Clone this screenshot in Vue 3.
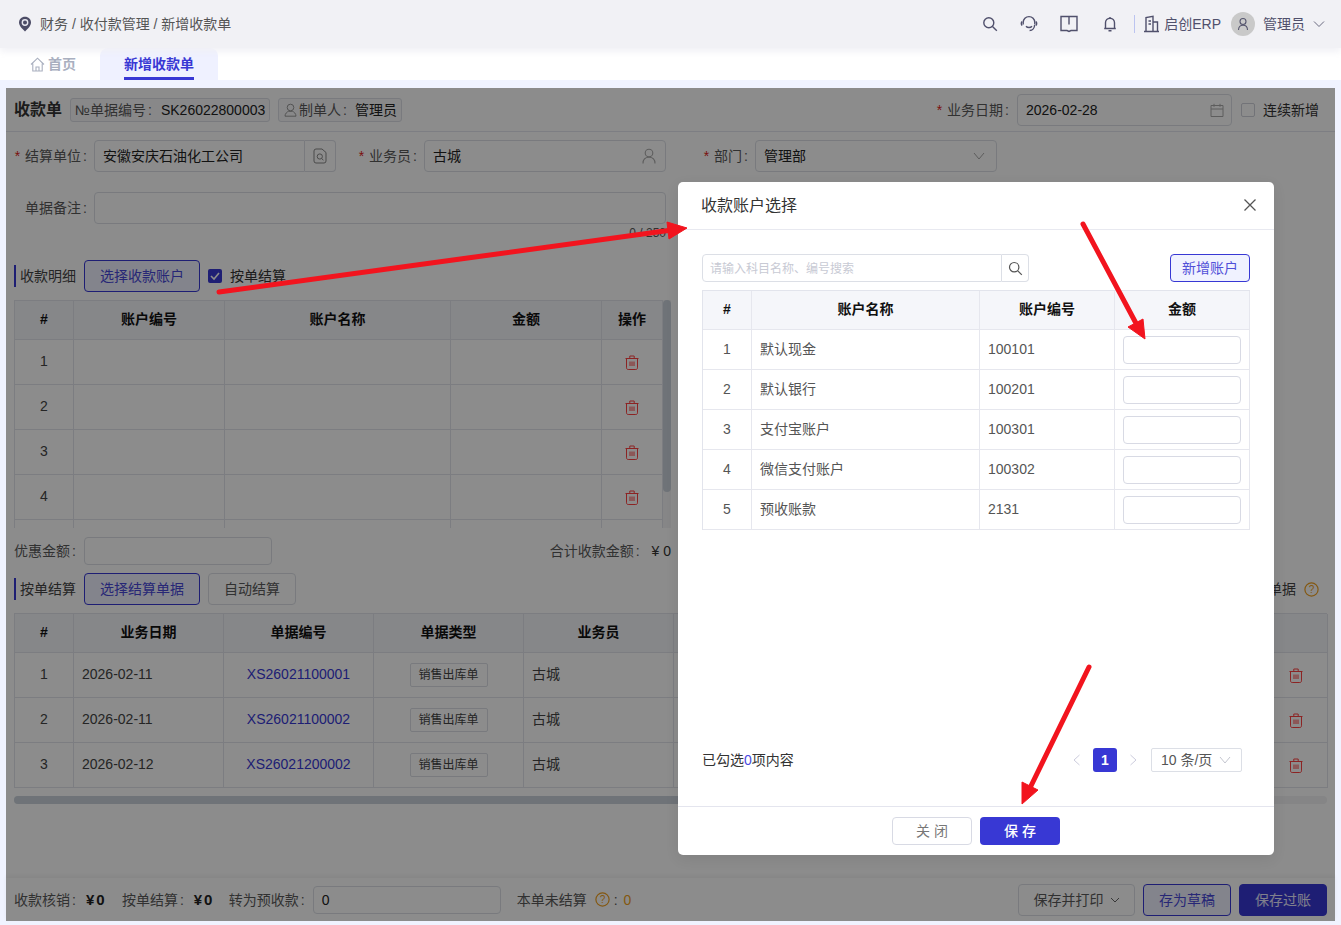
<script setup>
const accountRows = [1, 2, 3, 4]
const billRows = [
  { no: 1, date: '2026-02-11', code: 'XS26021100001' },
  { no: 2, date: '2026-02-11', code: 'XS26021100002' },
  { no: 3, date: '2026-02-12', code: 'XS26021200002' }
]
const modalRows = [
  { no: 1, name: '默认现金', code: '100101' },
  { no: 2, name: '默认银行', code: '100201' },
  { no: 3, name: '支付宝账户', code: '100301' },
  { no: 4, name: '微信支付账户', code: '100302' },
  { no: 5, name: '预收账款', code: '2131' }
]
</script>

<template>
  <div class="app">
    <header class="topbar">
      <svg class="pin" width="14" height="16" viewBox="0 0 14 16"><path d="M7 .8C3.500 .8 1 3.400 1 6.600c0 3.400 3.600 6.900 6 8.800 2.400-1.900 6-5.400 6-8.800C13 3.400 10.500 .8 7 .8z" fill="#4c4c66"/><circle cx="7" cy="6.500" r="2.700" fill="none" stroke="#e8e8f0" stroke-width="1.400"/></svg>
      <span class="crumb">财务 / 收付款管理 / 新增收款单</span>
      <div class="top-actions">
        <svg class="ti" width="18" height="18" viewBox="0 0 18 18"><circle cx="7.800" cy="7.800" r="5" /><path d="M11.500 11.500l4.300 4.300"/></svg>
        <svg class="ti gap21" width="18" height="18" viewBox="0 0 18 18"><path d="M3.200 9.500V7.400a5.800 5.800 0 0 1 11.600 0v2.100"/><path d="M2.200 6.500c-1.200 1-1.200 3 0 4M15.800 6.500c1.200 1 1.200 3 0 4"/><path d="M6 11.200c1.500 1.800 4.500 1.800 6 0"/><path d="M14.600 10c0 3-2 5.500-5 5.500"/></svg>
        <svg class="ti gap21" width="20" height="18" viewBox="0 0 20 18"><path d="M2 1.500h16v14h-6l-2 1-2-1H2z"/><path d="M10 1.500v8"/></svg>
        <svg class="ti gap22" width="18" height="18" viewBox="0 0 18 18"><path d="M4.500 13.500V7.800a4.500 4.500 0 0 1 9 0v5.700zM3.200 13.500h11.600M7.500 15.800h3M9 2V3.200"/></svg>
        <span class="divider"></span>
        <svg class="ti" width="17" height="18" viewBox="0 0 17 18"><path d="M1 16.500h15M3 16.500V2.500l7-1.200v15.200M10 7h4.500v9.500M5.500 6h2.500M5.500 9h2.500"/></svg>
        <span class="company">启创ERP</span>
        <span class="avatar">
          <svg width="14" height="14" viewBox="0 0 14 14"><circle cx="7" cy="4.500" r="3" fill="none" stroke="#55556e" stroke-width="1.100"/><path d="M2.500 13c0-3 2-4.800 4.500-4.800s4.500 1.800 4.500 4.800" fill="none" stroke="#55556e" stroke-width="1.100"/></svg>
        </span>
        <span class="username">管理员</span>
        <svg class="chev-top" width="12" height="8" viewBox="0 0 12 8"><path d="M1 1.500l5 5 5-5" fill="none" stroke="#6a6a80" stroke-width="1"/></svg>
      </div>
    </header>

    <nav class="tabs">
      <div class="tab">
        <svg width="15" height="15" viewBox="0 0 15 15"><path d="M1 7.500L7.500 1.200 14 7.500M2.800 6.500V14h9.400V6.500M6 14v-4h3v4" fill="none" stroke="#a9afbf" stroke-width="1.100"/></svg>
        <span>首页</span>
      </div>
      <div class="tab active"><span class="tab-text">新增收款单</span></div>
    </nav>

    <main class="panel">
      <div class="form-head">
        <strong class="title">收款单</strong>
        <div class="tag tag-no"><span class="muted">№单据编号<span class="c">:</span></span><span class="strong-val v9">SK26022800003</span></div>
        <div class="tag tag-user">
          <svg width="13" height="14" viewBox="0 0 13 14"><circle cx="6.500" cy="4.500" r="3.300" fill="none" stroke="#999" stroke-width="1"/><path d="M1 13.200c0-2.500 2-4.400 3.500-4.900h4c1.500.5 3.500 2.400 3.500 4.900z" fill="none" stroke="#999" stroke-width="1"/></svg>
          <span class="muted">制单人<span class="c">:</span></span><span class="strong-val v6">管理员</span>
        </div>
        <label class="date-label"><i>*</i>业务日期<span class="c">:</span></label>
        <div class="input date-input">
          <span>2026-02-28</span>
          <svg width="14" height="14" viewBox="0 0 14 14"><path d="M1 2.500h12v11H1zM1 6h12M4 .8v3M10 .8v3" fill="none" stroke="#aaa" stroke-width="1"/></svg>
        </div>
        <span class="check-empty"></span>
        <span class="check-text">连续新增</span>
      </div>

      <div class="form-row">
        <label class="flabel w80"><i>*</i>结算单位<span class="c">:</span></label>
        <div class="input unit-input"><span>安徽安庆石油化工公司</span></div>
        <div class="addon">
          <svg width="14" height="16" viewBox="0 0 14 16"><path d="M3 1h6l4 3.500V13a2 2 0 0 1-2 2H3a2 2 0 0 1-2-2V3a2 2 0 0 1 2-2z" fill="none" stroke="#888" stroke-width="1"/><circle cx="6.800" cy="8.500" r="2.600" fill="none" stroke="#888" stroke-width="1"/><path d="M8.800 10.500l1.500 1.800" stroke="#888"/></svg>
        </div>
        <label class="flabel w88"><i>*</i>业务员<span class="c">:</span></label>
        <div class="input w242">
          <span>古城</span>
          <svg width="16" height="16" viewBox="0 0 16 16"><circle cx="8" cy="5" r="3.800" fill="none" stroke="#aaa" stroke-width="1.100"/><path d="M2 15.500c0-4 2.500-6.200 6-6.200s6 2.200 6 6.200" fill="none" stroke="#aaa" stroke-width="1.100"/></svg>
        </div>
        <label class="flabel w89"><i>*</i>部门<span class="c">:</span></label>
        <div class="input w242 dept">
          <span>管理部</span>
          <svg width="12" height="8" viewBox="0 0 12 8"><path d="M1 1l5 6 5-6" fill="none" stroke="#aaa" stroke-width="1"/></svg>
        </div>
      </div>

      <div class="form-row memo-row">
        <label class="flabel w80">单据备注<span class="c">:</span></label>
        <div class="input memo"></div>
      </div>
      <div class="counter">0 / 250</div>

      <div class="section">
        <span class="sec-title">收款明细</span>
        <button class="btn outline w116">选择收款账户</button>
        <span class="check-on">
          <svg width="10" height="10" viewBox="0 0 10 10"><path d="M1 5l3 3 5-6" fill="none" stroke="#fff" stroke-width="1.600"/></svg>
        </span>
        <span class="check-text">按单结算</span>
      </div>

      <div class="detail">
        <div class="grid-table detail-table">
          <div class="tr th">
            <div>#</div><div>账户编号</div><div>账户名称</div><div>金额</div><div>操作</div>
          </div>
          <div v-for="n in accountRows" :key="n" class="tr">
            <div>{{ n }}</div><div></div><div></div><div></div>
            <div>
              <svg class="trash" width="14" height="15" viewBox="0 0 14 15"><path d="M.5 3.500h13M4.800 3.500V1h4.400v2.500M1.500 3.500v9.300c0 1.100.7 1.700 1.700 1.700h7.600c1 0 1.700-.6 1.700-1.700V3.500M5 6.500v4.500M7 6.500v4.500M9 6.500v4.500"/></svg>
            </div>
          </div>
          <div class="tr"><div></div><div></div><div></div><div></div><div></div></div>
        </div>
        <div class="vbar"><span></span></div>
      </div>

      <div class="summary">
        <label>优惠金额<span class="c">:</span></label>
        <div class="input discount"></div>
        <span class="total"><span class="muted">合计收款金额<span class="c">:</span></span><b>¥ 0</b></span>
      </div>

      <div class="section sec2">
        <span class="sec-title">按单结算</span>
        <button class="btn outline w116">选择结算单据</button>
        <button class="btn plain w88b">自动结算</button>
        <span class="sec-right">
          <span>结算单据</span>
          <svg width="15" height="15" viewBox="0 0 15 15"><circle cx="7.500" cy="7.500" r="6.600" fill="none" stroke="#f0a020" stroke-width="1.200"/><text x="7.500" y="11" text-anchor="middle" font-size="10" fill="#f0a020">?</text></svg>
        </span>
      </div>

      <div class="grid-table bill-table">
        <div class="tr th">
          <div>#</div><div>业务日期</div><div>单据编号</div><div>单据类型</div><div>业务员</div><div></div><div></div>
        </div>
        <div v-for="r in billRows" :key="r.no" class="tr">
          <div>{{ r.no }}</div>
          <div class="left">{{ r.date }}</div>
          <div class="link">{{ r.code }}</div>
          <div><span class="type-tag">销售出库单</span></div>
          <div class="left">古城</div>
          <div></div>
          <div>
            <svg class="trash shift" width="14" height="15" viewBox="0 0 14 15"><path d="M.5 3.500h13M4.800 3.500V1h4.400v2.500M1.500 3.500v9.300c0 1.100.7 1.700 1.700 1.700h7.600c1 0 1.700-.6 1.700-1.700V3.500M5 6.500v4.500M7 6.500v4.500M9 6.500v4.500"/></svg>
          </div>
        </div>
      </div>
      <div class="hbar"><span></span></div>

      <footer class="form-foot">
        <span class="muted">收款核销<span class="c">:</span></span><b class="money">¥0</b>
        <span class="muted m16">按单结算<span class="c">:</span></span><b class="money">¥0</b>
        <span class="muted m15">转为预收款<span class="c">:</span></span>
        <div class="input foot-input"><span>0</span></div>
        <span class="muted m16">本单未结算</span>
        <svg class="foot-q" width="15" height="15" viewBox="0 0 15 15"><circle cx="7.500" cy="7.500" r="6.600" fill="none" stroke="#f0a020" stroke-width="1.200"/><text x="7.500" y="11" text-anchor="middle" font-size="10" fill="#f0a020">?</text></svg>
        <span class="muted colon">:</span><span class="orange">0</span>
        <div class="foot-btns">
          <button class="btn plain w117">保存并打印
            <svg width="10" height="6" viewBox="0 0 10 6"><path d="M1 1l4 4 4-4" fill="none" stroke="#666" stroke-width="1"/></svg>
          </button>
          <button class="btn outline w88b">存为草稿</button>
          <button class="btn solid w88b">保存过账</button>
        </div>
      </footer>

      <div class="mask"></div>

      <section class="modal">
        <div class="modal-head">
          <span>收款账户选择</span>
          <svg width="14" height="14" viewBox="0 0 14 14"><path d="M1.500 1.500l11 11M12.500 1.500l-11 11" stroke="#555" stroke-width="1.300"/></svg>
        </div>
        <div class="modal-body">
          <div class="modal-tools">
            <div class="search-box"><span>请输入科目名称、编号搜索</span></div>
            <div class="search-btn">
              <svg width="15" height="15" viewBox="0 0 15 15"><circle cx="6.200" cy="6.200" r="4.700" fill="none" stroke="#555" stroke-width="1.200"/><path d="M9.800 9.800l4 4" stroke="#555" stroke-width="1.200"/></svg>
            </div>
            <button class="btn add">新增账户</button>
          </div>
          <div class="grid-table modal-table">
            <div class="tr th">
              <div>#</div><div>账户名称</div><div>账户编号</div><div>金额</div>
            </div>
            <div v-for="r in modalRows" :key="r.no" class="tr">
              <div>{{ r.no }}</div>
              <div class="left">{{ r.name }}</div>
              <div class="left">{{ r.code }}</div>
              <div class="amount-cell"><span class="amount"></span></div>
            </div>
          </div>
          <div class="pager-row">
            <span class="picked">已勾选<em>0</em>项内容</span>
            <div class="pager">
              <svg width="9" height="12" viewBox="0 0 9 12"><path d="M7.500 1L2 6l5.500 5" fill="none" stroke="#ccd" stroke-width="1"/></svg>
              <span class="page-on">1</span>
              <svg width="9" height="12" viewBox="0 0 9 12"><path d="M1.500 1L7 6l-5.500 5" fill="none" stroke="#ccd" stroke-width="1"/></svg>
              <div class="page-size">
                <span>10 条/页</span>
                <svg width="12" height="8" viewBox="0 0 12 8"><path d="M1 1l5 6 5-6" fill="none" stroke="#c4c6d0" stroke-width="1"/></svg>
              </div>
            </div>
          </div>
        </div>
        <div class="modal-foot">
          <button class="btn close">关 闭</button>
          <button class="btn save">保 存</button>
        </div>
      </section>
    </main>

    <svg class="arrows" width="1341" height="925" viewBox="0 0 1341 925">
      <g fill="#f2141e" stroke="#f2141e">
        <path d="M219 292L672 230" stroke-width="5" stroke-linecap="round" fill="none"/>
        <path d="M687 228L667 222L669 239Z" stroke-width="1"/>
        <path d="M1083 224L1138 327" stroke-width="5" stroke-linecap="round" fill="none"/>
        <path d="M1145 339L1128 327L1143 319Z" stroke-width="1"/>
        <path d="M1089 667L1029 790" stroke-width="5" stroke-linecap="round" fill="none"/>
        <path d="M1022 804L1022 782L1038 790Z" stroke-width="1"/>
      </g>
    </svg>
  </div>
</template>

<style>
html, body { margin: 0; padding: 0; background: #f0f3ff; }
</style>

<style scoped>
* { box-sizing: border-box; }
.app {
  position: relative;
  width: 1341px;
  height: 925px;
  overflow: hidden;
  display: flex;
  flex-direction: column;
  background: #f0f3ff;
  color: #333;
  font: 14px/20px "Liberation Sans", "Noto Sans CJK SC", sans-serif;
}
.topbar {
  height: 48px;
  flex: none;
  display: flex;
  align-items: center;
  padding-left: 18px;
  background: #f1f1f5;
  box-shadow: 0 4px 6px rgba(241, 241, 245, .9);
  position: relative;
  z-index: 1;
}
.pin { margin-right: 8px; }
.crumb { color: #555; }
.top-actions { margin-left: auto; display: flex; align-items: center; padding-right: 16px; }
.ti { fill: none; stroke: #50506c; stroke-width: 1.400; }
.gap21 { margin-left: 21px; }
.gap22 { margin-left: 22px; }
.divider { width: 1px; height: 18px; background: #bcc4f0; margin: 0 8px 0 15px; }
.company { margin-left: 4px; color: #50506c; }
.avatar {
  width: 24px; height: 24px; border-radius: 50%;
  background: #c9c9c9; margin-left: 10px;
  display: flex; align-items: center; justify-content: center;
}
.username { margin-left: 8px; color: #50506c; }
.chev-top { margin-left: 8px; }

.tabs { height: 32px; flex: none; background: #fff; display: flex; }
.tab {
  width: 100px; display: flex; align-items: center; gap: 3px;
  padding-left: 30px; color: #a9afbf; font-weight: 700;
}
.tab.active {
  width: 118px; padding-left: 24px;
  background: #eff1ff; border-radius: 8px 8px 0 0;
  color: #3838d4;
}
.tab-text { height: 32px; line-height: 32px; border-bottom: 3px solid #3838d4; }

.panel {
  position: relative;
  margin: 8px 6px 4px 6px;
  height: 833px;
  background: #fff;
  padding: 0 8px;
  display: flex;
  flex-direction: column;
}
.muted { color: #5a5a5a; white-space: nowrap; }
.c { margin-left: 2px; }
.form-head {
  height: 44px; flex: none;
  display: flex; align-items: center;
  margin: 0 -8px; padding: 0 8px;
  border-bottom: 1px solid #e4e6ee;
}
.title { font-size: 16px; width: 56px; }
.tag {
  height: 24px; display: flex; align-items: center;
  border: 1px solid #dcdfe6; border-radius: 3px; background: #f8f8fa;
  padding: 0 4px; margin-right: 8px;
}
.tag-no { width: 200px; }
.tag-user { width: 124px; gap: 2px; padding-left: 5px; }
.strong-val { color: #222; white-space: nowrap; }
.v9 { margin-left: 9px; }
.v6 { margin-left: 6px; }
label i { color: #e02020; font-style: normal; margin-right: 5px; }
.date-label { margin-left: auto; color: #5a5a5a; margin-right: 8px; white-space: nowrap; }
.input {
  height: 32px; flex: none;
  display: flex; align-items: center; justify-content: space-between;
  border: 1px solid #dcdfe6; border-radius: 4px; padding: 0 8px;
  background: #fff;
  color: #222;
}
.date-input { width: 215px; padding-right: 7px; }
.dept { padding-right: 11px; }
.check-empty { width: 14px; height: 14px; border: 1px solid #cfd2da; border-radius: 2px; margin: 0 8px 0 9px; }
.check-text { color: #333; }
.form-head .check-text { margin-right: 8px; }

.form-row { display: flex; align-items: center; margin-top: 8px; flex: none; height: 32px; }
.memo-row { margin-top: 20px; }
.flabel { flex: none; color: #5a5a5a; text-align: right; padding-right: 7px; white-space: nowrap; }
.w80 { width: 80px; }
.w88 { width: 88px; }
.w89 { width: 89px; }
.w242 { width: 242px; }
.unit-input { width: 211px; border-radius: 4px 0 0 4px; }
.addon {
  width: 31px; height: 32px; flex: none;
  display: flex; align-items: center; justify-content: center;
  border: 1px solid #dcdfe6; border-left: 0; border-radius: 0 4px 4px 0;
}
.memo { width: 572px; }
.counter { height: 18px; width: 652px; text-align: right; color: #5a5a5a; line-height: 18px; flex: none; font-size: 12px; }

.section { display: flex; align-items: center; height: 32px; margin-top: 18px; flex: none; }
.sec2 { margin-top: 8px; }
.sec-title {
  width: 70px; height: 22px; line-height: 22px;
  border-left: 2px solid #3838d4; padding-left: 4px; color: #444; white-space: nowrap;
}
.btn {
  height: 32px; flex: none; padding: 0;
  font: inherit; border-radius: 4px; cursor: pointer;
  display: inline-flex; align-items: center; justify-content: center;
}
.outline { background: #eff1ff; border: 1px solid #3838d4; color: #4848d8; }
.plain { background: #fff; border: 1px solid #dcdfe6; color: #5a5a5a; }
.solid { background: #3838d4; border: 1px solid #3838d4; color: #e8e8ff; }
.w116 { width: 116px; }
.w88b { width: 88px; }
.w117 { width: 117px; gap: 6px; }
.check-on {
  width: 14px; height: 14px; border-radius: 2px; background: #3838d4;
  margin: 0 8px; display: flex; align-items: center; justify-content: center;
}
.sec2 .btn.plain { margin-left: 8px; }
.sec-right { margin-left: auto; display: flex; align-items: center; gap: 8px; padding-right: 8px; color: #444; }

.grid-table { border-left: 1px solid #e2e4ec; border-top: 1px solid #e2e4ec; flex: none; }
.tr { display: grid; height: 45px; }
.tr > div {
  display: flex; align-items: center; justify-content: center;
  border-right: 1px solid #e2e4ec; border-bottom: 1px solid #e2e4ec;
  padding-bottom: 2px;
  color: #444;
  min-width: 0;
}
.tr > div.left { justify-content: flex-start; padding-left: 8px; }
.tr.th { height: 39px; background: #f5f6fa; }
.tr.th > div { font-weight: 700; color: #111; }
.trash { fill: none; stroke: #ff4040; stroke-width: 1; margin-top: 2px; }
.shift { margin-right: 2px; }

.detail { margin-top: 8px; width: 657px; height: 228px; display: flex; overflow: hidden; flex: none; }
.detail-table { width: 649px; }
.detail-table .tr { grid-template-columns: 59px 151px 226px 151px 61px; }
.vbar { width: 8px; height: 228px; flex: none; background: #f4f4f6; }
.vbar span { display: block; height: 192px; background: #cad1da; border-radius: 4px; }

.summary { display: flex; align-items: center; height: 28px; margin-top: 9px; width: 657px; flex: none; }
.summary label { width: 70px; color: #5a5a5a; white-space: nowrap; }
.discount { width: 188px; height: 28px; }
.total { margin-left: auto; display: flex; gap: 12px; }
.total b { font-weight: 400; color: #333; }

.bill-table { margin-top: 8px; width: 1313px; }
.bill-table .tr { grid-template-columns: 59px 150px 150px 150px 150px 592px 62px; }
.tr > div.link { color: #3838d4; }
.type-tag {
  width: 78px; height: 24px; border: 1px solid #dcdfe6; border-radius: 2px; margin-top: 2px;
  font-size: 12px; line-height: 23px; text-align: center; background: #fff; color: #444;
}
.hbar { margin-top: 8px; height: 8px; width: 1313px; background: #f2f2f4; border-radius: 4px; flex: none; }
.hbar span { display: block; width: 1240px; height: 8px; background: #cad1da; border-radius: 4px; }

.form-foot {
  margin: auto -8px 0; height: 43px; flex: none;
  padding: 0 8px;
  display: flex; align-items: center;
  background: #fff;
  box-shadow: 0 -2px 4px rgba(0, 0, 0, .05);
}
.money { margin-left: 10px; color: #222; width: 20px; font-size: 15px; letter-spacing: 2px; white-space: nowrap; }
.m16 { margin-left: 16px; }
.m15 { margin-left: 15px; }
.foot-input { width: 188px; height: 28px; margin-left: 8px; }
.foot-q { margin-left: 8px; }
.colon { margin-left: 4px; }
.orange { color: #f0a020; margin-left: 6px; }
.foot-btns { margin-left: auto; display: flex; gap: 8px; }
.foot-btns .btn { gap: 6px; }

.mask { position: absolute; inset: 0; background: rgba(0, 0, 0, .45); }

.modal {
  position: absolute;
  left: 672px; top: 94px;
  width: 596px; height: 673px;
  background: #fff;
  border-radius: 5px;
  display: flex; flex-direction: column;
  box-shadow: 0 4px 14px rgba(0, 0, 0, .08);
}
.modal-head {
  height: 48px; flex: none;
  display: flex; align-items: center; justify-content: space-between;
  padding: 0 17px 0 23px;
  border-bottom: 1px solid #e8e9f0;
  font-size: 16px; color: #333;
}
.modal-head svg { margin-bottom: 2px; }
.modal-body { flex: 1; padding: 24px 24px 0; display: flex; flex-direction: column; min-height: 0; }
.modal-tools { display: flex; height: 28px; flex: none; }
.search-box {
  width: 300px; height: 28px; border: 1px solid #dcdfe6; border-radius: 4px 0 0 4px;
  padding-left: 7px; font-size: 12px; line-height: 28px; color: #c8cad4;
}
.search-btn {
  width: 27px; height: 28px; border: 1px solid #dcdfe6; border-left: 0; border-radius: 0 4px 4px 0;
  display: flex; align-items: center; justify-content: center;
}
.add {
  margin-left: auto; width: 80px; height: 28px;
  background: #f0f2ff; border: 1px solid #3838d4; color: #5050d8;
}
.modal-table { margin-top: 8px; width: 548px; }
.modal-table .tr { grid-template-columns: 49px 228px 135px 135px; height: 40px; }
.modal-table .tr.th { height: 39px; }
.modal-table .tr > div { border-color: #e6e7ee; color: #555; padding-bottom: 1px; }
.modal-table .tr.th > div { color: #111; padding-bottom: 2px; }
.tr > div.amount-cell { padding-bottom: 0; }
.amount { width: 118px; height: 28px; border: 1px solid #d8dae4; border-radius: 4px; }
.pager-row {
  margin-top: auto; height: 24px; flex: none; margin-bottom: 34px;
  display: flex; align-items: center; justify-content: space-between;
}
.picked em { font-style: normal; color: #4a4ae0; }
.pager { display: flex; align-items: center; padding-right: 8px; gap: 0; }
.page-on {
  width: 24px; height: 24px; margin: 0 12px; border-radius: 3px;
  background: #3838d4; color: #fff; font-weight: 700; text-align: center; line-height: 24px;
}
.page-size {
  width: 91px; height: 24px; margin-left: 13px; padding: 0 10px 0 9px;
  border: 1px solid #dcdfe6; border-radius: 2px;
  display: flex; align-items: center; justify-content: space-between; color: #555;
}
.modal-foot {
  height: 49px; flex: none; border-top: 1px solid #e4e5ee;
  display: flex; justify-content: center; align-items: flex-start; gap: 8px; padding-top: 10px;
}
.close { width: 80px; height: 28px; background: #fff; border: 1px solid #d8dae4; color: #777; }
.save { width: 80px; height: 28px; background: #3838d4; border: 0; color: #fff; font-weight: 500; }
.arrows { position: absolute; left: 0; top: 0; pointer-events: none; z-index: 5; }
</style>
